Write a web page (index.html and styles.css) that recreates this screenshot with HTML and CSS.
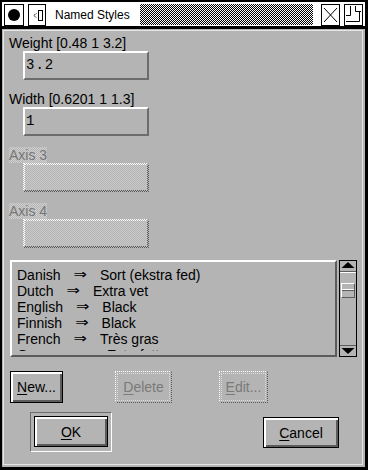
FILE: index.html
```html
<!DOCTYPE html>
<html lang="en">
<head>
    <meta charset="UTF-8">
    <title>Named Styles</title>
    <link rel="stylesheet" href="styles.css">
</head>
<body>
    <div class="window">
        <div class="titlebar">
            <div class="tb-box menu"><span class="dot"></span></div>
            <div class="tb-box iconify">
                <svg width="16" height="20" viewBox="0 0 16 20">
                    <path d="M7.5 8.5 L4.5 10.5 L7.5 12.5" fill="none" stroke="#000" stroke-width="1" stroke-dasharray="1 1"/>
                    <rect x="9.5" y="5.5" width="4" height="10" fill="none" stroke="#000"/>
                </svg>
            </div>
            <div class="title">Named Styles</div>
            <div class="grip"></div>
            <div class="tb-box close">
                <svg width="17" height="20" viewBox="0 0 17 20">
                    <path d="M2 3 L15 17 M15 3 L2 17" stroke="#000" stroke-width="1" fill="none"/>
                </svg>
            </div>
            <div class="tb-box maxi">
                <svg width="17" height="20" viewBox="0 0 17 20">
                    <path d="M5.5 1 V10.5 H1" fill="none" stroke="#000"/>
                    <path d="M10.5 1 V6.5 H16" fill="none" stroke="#000"/>
                    <path d="M14.5 6.5 V16.5 H1" fill="none" stroke="#000"/>
                </svg>
            </div>
        </div>

        <div class="panel">
            <div class="axis">
                <div class="label">Weight [0.48 1 3.2]</div>
                <div class="field">3.2</div>
            </div>
            <div class="axis">
                <div class="label">Width [0.6201 1 1.3]</div>
                <div class="field">1</div>
            </div>
            <div class="axis off">
                <div class="label"><span>Axis 3</span></div>
                <div class="field"><div class="fill"></div></div>
            </div>
            <div class="axis off">
                <div class="label"><span>Axis 4</span></div>
                <div class="field"><div class="fill"></div></div>
            </div>

            <div class="listrow">
                <div class="list">
                    <div class="items">
                        <div class="item">Danish<span class="arr">⇒</span>Sort (ekstra fed)</div>
                        <div class="item">Dutch<span class="arr">⇒</span>Extra vet</div>
                        <div class="item">English<span class="arr">⇒</span>Black</div>
                        <div class="item">Finnish<span class="arr">⇒</span>Black</div>
                        <div class="item">French<span class="arr">⇒</span>Très gras</div>
                        <div class="item">German<span class="arr">⇒</span>Extrafett</div>
                    </div>
                </div>
                <div class="scrollbar">
                    <div class="sb-up">
                        <svg width="16" height="10" viewBox="0 0 16 10"><polygon points="1.5,7 14.5,7 8,1" fill="#000"/></svg>
                    </div>
                    <div class="trough"><div class="thumb"></div></div>
                    <div class="sb-down">
                        <svg width="16" height="10" viewBox="0 0 16 10"><polygon points="1.5,2 14.5,2 8,8" fill="#000"/></svg>
                    </div>
                </div>
            </div>

            <div class="actions">
                <div class="btn new"><u>N</u>ew...</div>
                <div class="btn off delete"><u>D</u>elete</div>
                <div class="btn off edit"><u>E</u>dit...</div>
            </div>

            <div class="dialog-buttons">
                <div class="default-frame">
                    <div class="btn ok"><u>O</u>K</div>
                </div>
                <div class="btn cancel"><u>C</u>ancel</div>
            </div>
        </div>
    </div>
</body>
</html>
```

FILE: styles.css
```css
* {
    margin: 0;
    padding: 0;
    box-sizing: border-box;
}

body {
    background: #000;
    font-family: "Liberation Sans", Arial, sans-serif;
    font-size: 14px;
    color: #000;
}

.window {
    width: 368px;
    height: 470px;
    border: solid #000;
    border-width: 2px 3px 3px 2px;
    background: #b4b4b4;
    display: flex;
    flex-direction: column;
}

/* title bar */
.titlebar {
    height: 27px;
    background: #fff;
    border-bottom: 3px solid #000;
    display: flex;
    align-items: flex-start;
    padding: 2px 2px 0 2px;
}

.titlebar > * {
    flex-shrink: 0;
}

.tb-box {
    height: 22px;
    border: 1px solid #000;
    display: flex;
    align-items: center;
    justify-content: center;
    background: #fff;
}

.menu { width: 20px; }

.dot {
    width: 12px;
    height: 12px;
    border-radius: 50%;
    background: #000;
}

.iconify {
    width: 18px;
    margin-left: 4px;
}

.title {
    width: 94px;
    padding-left: 9px;
    font-size: 12px;
    line-height: 22px;
    white-space: nowrap;
}

.titlebar .grip {
    flex: 1 1 auto;
    height: 21px;
    margin-right: 8px;
    background: repeating-conic-gradient(#000 0 25%, #fff 0 50%) 0 0 / 2px 2px;
}

.close { width: 19px; }

.maxi {
    width: 19px;
    margin-left: 4px;
}

/* dialog body */
.panel {
    flex: 1;
    margin: 1px 2px 2px 1px;
    border: 1px solid #e4e4e4;
    padding: 4px 0 0 5px;
    display: flex;
    flex-direction: column;
}

.axis + .axis {
    margin-top: 11px;
}

.label {
    height: 16px;
    line-height: 16px;
}

.field {
    margin-left: 14px;
    width: 126px;
    height: 29px;
    border: 2px solid;
    border-color: #fff #6c6c6c #6c6c6c #fff;
    padding: 0 0 1px 1px;
    display: flex;
    align-items: center;
    font-family: "Liberation Mono", "Courier New", monospace;
    font-size: 14px;
    letter-spacing: 1px;
}

.axis.off .label span {
    color: #767676;
    background: repeating-conic-gradient(#d0d0d0 0 25%, #b4b4b4 0 50%) 0 0 / 2px 2px;
}

.axis.off .field {
    border: 1px dotted;
    border-color: #fff #5c5c5c #5c5c5c #fff;
    padding: 0;
}

.axis.off .fill {
    width: 100%;
    height: 100%;
    border: 1px dotted;
    border-color: #fff #5c5c5c #5c5c5c #fff;
    background: repeating-conic-gradient(#cacaca 0 25%, #b4b4b4 0 50%) 0 0 / 2px 2px;
}

/* list */
.listrow {
    margin-top: 12px;
    height: 97px;
    display: flex;
}

.list {
    margin-left: 1px;
    width: 327px;
    border: 2px solid;
    border-color: #fff #5c5c5c #5c5c5c #fff;
    padding: 5px 0 0 5px;
}

.items {
    height: 84px;
    overflow: hidden;
}

.item {
    height: 16px;
    line-height: 16px;
    white-space: nowrap;
}

.arr {
    display: inline-block;
    margin: 0 13px 0 13px;
    font-family: "DejaVu Sans", sans-serif;
    font-size: 16px;
    line-height: 16px;
    transform: scaleY(0.85);
}

.scrollbar {
    margin-left: 2px;
    width: 18px;
    border: 1px solid #000;
    display: flex;
    flex-direction: column;
}

.sb-up, .sb-down {
    height: 11px;
    display: flex;
    align-items: center;
}

.sb-up { border-bottom: 1px solid #5c5c5c; }
.sb-down { border-top: 1px solid #5c5c5c; }

.trough {
    flex: 1;
    padding: 10px 0 0 1px;
    border-top: 1px solid #fff;
}

.thumb {
    width: 14px;
    height: 15px;
    border: 1px solid;
    border-color: #fff #5c5c5c #5c5c5c #fff;
    background: linear-gradient(#b4b4b4 0 5px, #fff 5px 6px, #5c5c5c 6px 7px, #b4b4b4 7px);
}

/* buttons */
.btn {
    display: flex;
    align-items: center;
    justify-content: center;
    border: 1px solid #000;
    box-shadow: inset 2px 2px #fff, inset -2px -2px #5c5c5c;
    line-height: 16px;
}

.btn u {
    text-underline-offset: 2px;
}

.actions {
    margin-top: 14px;
    height: 32px;
    display: flex;
}

.new {
    margin-left: 1px;
    width: 53px;
}

.btn.off {
    color: #7a7a7a;
    border: 1px dotted;
    border-color: #fff #5c5c5c #5c5c5c #fff;
    box-shadow: none;
    outline: 1px dotted #dcdcdc;
    outline-offset: -3px;
}

.delete {
    margin-left: 52px;
    width: 57px;
}

.edit {
    margin-left: 47px;
    width: 49px;
}

.dialog-buttons {
    margin-top: 9px;
    display: flex;
    align-items: flex-start;
}

.default-frame {
    margin-left: 21px;
    width: 82px;
    height: 40px;
    border: 1px solid;
    border-color: #6c6c6c #fff #fff #6c6c6c;
    padding: 3px;
}

.ok {
    width: 74px;
    height: 31px;
}

.cancel {
    margin-left: 151px;
    margin-top: 5px;
    width: 76px;
    height: 31px;
}
```
